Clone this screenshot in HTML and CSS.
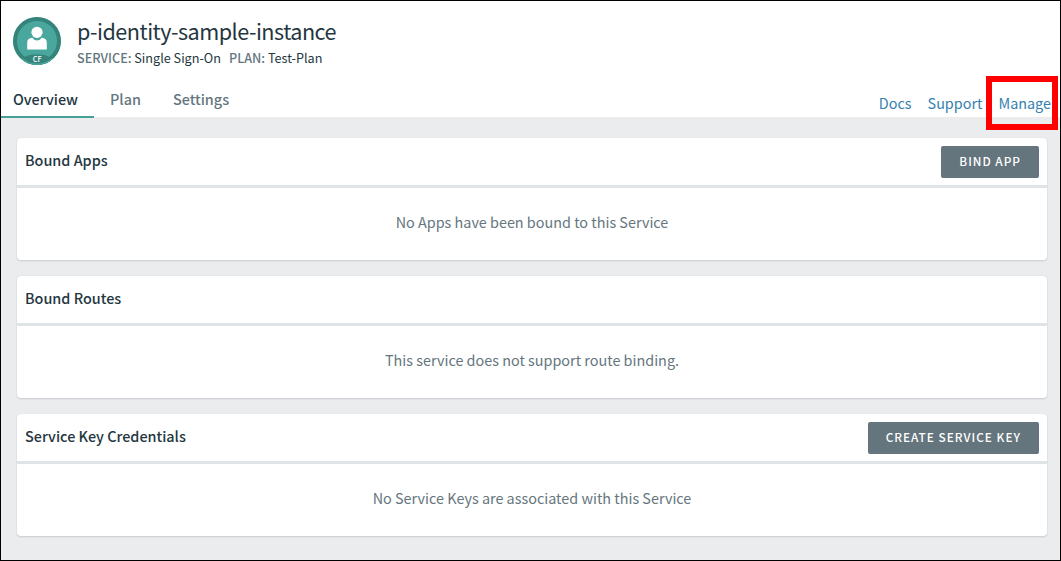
FILE: index.html
```html
<!DOCTYPE html>
<html lang="en">
<head>
<meta charset="utf-8">
<title>p-identity-sample-instance</title>
<link rel="stylesheet" href="styles.css">
</head>
<body>
<div class="page">
  <header class="header">
    <div class="identity">
      <svg class="avatar" width="48" height="48" viewBox="0 0 48 48">
        <defs><clipPath id="disc"><circle cx="24" cy="24" r="24"/></clipPath></defs>
        <circle cx="24" cy="24" r="24" fill="#4aa79d"/>
        <g clip-path="url(#disc)">
          <circle cx="24" cy="24" r="22" fill="none" stroke="#35837a" stroke-width="4"/>
          <path d="M10 41C14 38 18 37.4 24 37.4S34 38 38 41L36 48H12Z" fill="#35837a"/>
          <path d="M8.5 41.5Q15 47.4 24 47.4T39.5 41.5" fill="none" stroke="#4aa79d" stroke-width="1.6"/>
        </g>
        <circle cx="24" cy="15.3" r="5.6" fill="#fff"/>
        <path d="M14.2 32.6V25.5Q14.2 21.2 19.2 20.8Q21 23.6 24 23.6T28.8 20.8Q33.8 21.2 33.8 25.5V32.6Z" fill="#fff"/>
        <text x="24.2" y="44.8" text-anchor="middle" class="avatar-label">CF</text>
      </svg>
      <div class="names">
        <h1 class="title">p-identity-sample-instance</h1>
        <div class="meta">
          <span><b class="meta-key">SERVICE:</b> Single Sign-On</span>
          <span><b class="meta-key">PLAN:</b> Test-Plan</span>
        </div>
      </div>
    </div>
    <div class="nav">
      <nav class="tabs">
        <a class="tab tab-active">Overview</a>
        <a class="tab">Plan</a>
        <a class="tab">Settings</a>
      </nav>
      <div class="links">
        <a class="link">Docs</a>
        <a class="link">Support</a>
        <a class="link link-marked">Manage</a>
      </div>
    </div>
  </header>
  <main class="content">
    <section class="panel">
      <div class="panel-head"><h2 class="panel-title">Bound Apps</h2><button class="button">BIND APP</button></div>
      <div class="panel-body">No Apps have been bound to this Service</div>
    </section>
    <section class="panel">
      <div class="panel-head"><h2 class="panel-title">Bound Routes</h2></div>
      <div class="panel-body">This service does not support route binding.</div>
    </section>
    <section class="panel">
      <div class="panel-head"><h2 class="panel-title">Service Key Credentials</h2><button class="button">CREATE SERVICE KEY</button></div>
      <div class="panel-body">No Service Keys are associated with this Service</div>
    </section>
  </main>
</div>
</body>
</html>
```
FILE: styles.css
```css
*, *::after { box-sizing: border-box; }
body {
  margin: 0;
  font-family: "Noto Sans CJK SC", "Open Sans", sans-serif;
  font-size: 14.4px;
  color: #243640;
}
.page {
  height: 561px;
  border: 1px solid #000;
  background: #ebecee;
  overflow: hidden;
}
.header { height: 116px; background: #fff; }
.identity { display: flex; gap: 16px; height: 80px; padding: 16px 0 0 12px; }
.avatar-label { font-size: 7.4px; font-weight: 500; fill: #fff; }
.title { margin: 0; font-size: 21.6px; font-weight: 400; line-height: 28px; letter-spacing: -0.5px; }
.meta { display: flex; gap: 8px; margin-top: 2px; font-size: 12.65px; line-height: 22px; }
.meta-key { font-weight: 500; color: #65767e; }
.nav { display: flex; justify-content: space-between; height: 37px; }
.tabs { display: flex; }
.tab { padding: 7px 16px 0; height: 37px; line-height: 22px; font-weight: 500; color: #65767e; }
.tab-active { padding-left: 12px; color: #243640; border-bottom: 2px solid #46a097; }
.links { display: flex; gap: 16px; padding: 11px 9px 0 0; line-height: 22px; }
.link { color: #3481b0; }
.link-marked { position: relative; }
.link-marked::after {
  content: "";
  position: absolute;
  left: -12px;
  top: -16px;
  width: 72px;
  height: 54px;
  border: 6px solid #f00;
}
.content { display: flex; flex-direction: column; gap: 16px; padding: 21px 13px 0 16px; }
.panel {
  height: 122px;
  border-radius: 4px;
  background: #fff;
  box-shadow: 0 0 1px #cfd5d9, 0 1px 2px #c6cacd;
}
.panel-head {
  display: flex;
  justify-content: space-between;
  align-items: flex-start;
  height: 50px;
  padding: 8px;
  border-bottom: 3px solid #dfe4e7;
}
.panel-title { margin: 3px 0 0; font-size: 14.4px; font-weight: 500; line-height: 22px; }
.button {
  height: 32px;
  padding: 0 18px 2px;
  border: 0;
  border-radius: 2px;
  background: #64757d;
  color: #fff;
  font: 500 11.8px/30px "Noto Sans CJK SC", "Open Sans", sans-serif;
  letter-spacing: 1px;
}
.panel-body { padding-top: 23px; line-height: 22px; text-align: center; color: #65767e; }
```
